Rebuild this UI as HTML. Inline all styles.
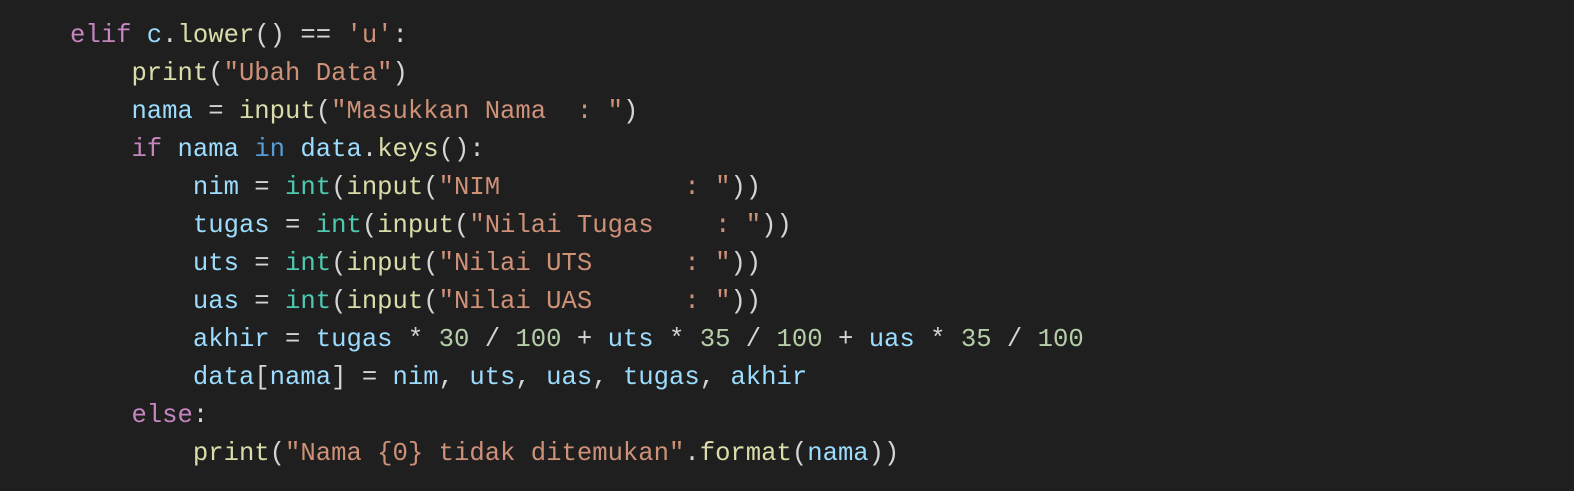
<!DOCTYPE html>
<html><head><meta charset="utf-8"><style>
html,body{margin:0;padding:0;background:#1f1f1f;width:1574px;height:491px;overflow:hidden}
pre{margin:0;position:absolute;left:70px;top:17px;font-family:"Liberation Mono",monospace;font-size:25.6px;line-height:38px;color:#d4d4d4;white-space:pre}
.k{color:#c586c0}.v{color:#9cdcfe}.f{color:#dcdcaa}.s{color:#ce9178}.n{color:#b5cea8}.t{color:#4ec9b0}.b{color:#569cd6}
</style></head><body><pre><span class="k">elif</span> <span class="v">c</span>.<span class="f">lower</span>() == <span class="s">'u'</span>:
    <span class="f">print</span>(<span class="s">"Ubah Data"</span>)
    <span class="v">nama</span> = <span class="f">input</span>(<span class="s">"Masukkan Nama  : "</span>)
    <span class="k">if</span> <span class="v">nama</span> <span class="b">in</span> <span class="v">data</span>.<span class="f">keys</span>():
        <span class="v">nim</span> = <span class="t">int</span>(<span class="f">input</span>(<span class="s">"NIM            : "</span>))
        <span class="v">tugas</span> = <span class="t">int</span>(<span class="f">input</span>(<span class="s">"Nilai Tugas    : "</span>))
        <span class="v">uts</span> = <span class="t">int</span>(<span class="f">input</span>(<span class="s">"Nilai UTS      : "</span>))
        <span class="v">uas</span> = <span class="t">int</span>(<span class="f">input</span>(<span class="s">"Nilai UAS      : "</span>))
        <span class="v">akhir</span> = <span class="v">tugas</span> * <span class="n">30</span> / <span class="n">100</span> + <span class="v">uts</span> * <span class="n">35</span> / <span class="n">100</span> + <span class="v">uas</span> * <span class="n">35</span> / <span class="n">100</span>
        <span class="v">data</span>[<span class="v">nama</span>] = <span class="v">nim</span>, <span class="v">uts</span>, <span class="v">uas</span>, <span class="v">tugas</span>, <span class="v">akhir</span>
    <span class="k">else</span>:
        <span class="f">print</span>(<span class="s">"Nama {0} tidak ditemukan"</span>.<span class="f">format</span>(<span class="v">nama</span>))</pre></body></html>
